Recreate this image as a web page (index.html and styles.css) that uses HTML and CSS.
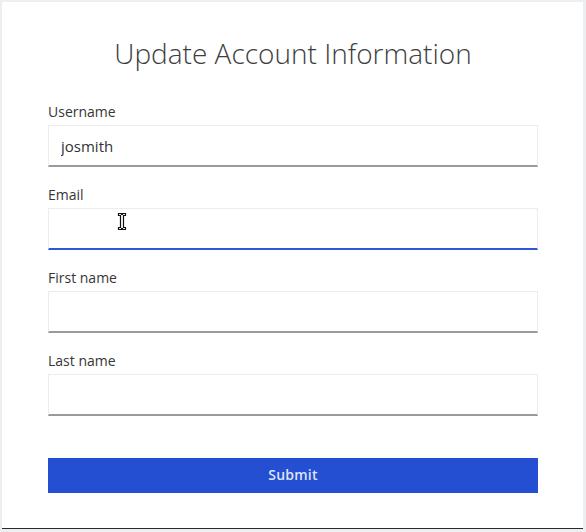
FILE: index.html
```html
<!DOCTYPE html>
<html lang="en">
<head>
    <meta charset="UTF-8">
    <meta name="viewport" content="width=device-width, initial-scale=1.0">
    <title>Update Account Information</title>
    <link rel="stylesheet" href="styles.css">
</head>
<body>
    <div class="card">
        <h1>Update Account Information</h1>
        <form class="account-form">
            <div class="field">
                <label for="username">Username</label>
                <input type="text" id="username" value="josmith">
            </div>
            <div class="field">
                <label for="email">Email</label>
                <div class="input-wrap">
                    <input type="text" id="email" class="focused">
                    <!-- mouse pointer over the email box -->
                    <svg class="cursor" width="10" height="19" viewBox="0 0 10 19">
                        <path d="M1.5 1.5h3v1h1v-1h3v2h-2v12h2v2h-3v-1h-1v1h-3v-2h2v-12h-2z" fill="#fff" stroke="#111" stroke-width="1.2"/>
                    </svg>
                </div>
            </div>
            <div class="field">
                <label for="firstName">First name</label>
                <input type="text" id="firstName">
            </div>
            <div class="field">
                <label for="lastName">Last name</label>
                <input type="text" id="lastName">
            </div>
            <button type="submit">Submit</button>
        </form>
    </div>
</body>
</html>
```

FILE: styles.css
```css
body {
    margin: 0;
    padding: 2px 3px 0 2px;
    background: #eceeef;
    font-family: "Open Sans", "Noto Sans", sans-serif;
}
.card {
    background: #fff;
    height: 527px;
    box-sizing: border-box;
    padding: 36px 45px 0 46px;
    border-bottom: 1px solid #2a2a2a;
}
h1 {
    margin: 0 0 34px 0;
    text-align: center;
    font-weight: 300;
    font-size: 28px;
    line-height: 30px;
    color: #3e3e3e;
}
.field {
    display: flex;
    flex-direction: column;
    margin-bottom: 18px;
}
.field label {
    font-size: 14px;
    line-height: 20px;
    color: #363636;
    margin-bottom: 3px;
}
.input-wrap {
    position: relative;
}
.field input {
    width: 100%;
    box-sizing: border-box;
    height: 42px;
    padding: 0 12px;
    border: 1px solid #ececec;
    border-bottom: 2px solid #9a9a9a;
    font-family: "Open Sans", "Noto Sans", sans-serif;
    font-size: 15px;
    color: #333;
    outline: none;
}
.field input.focused {
    border-bottom-color: #2c58d6;
}
.cursor {
    position: absolute;
    left: 69px;
    top: 4px;
}
.account-form button {
    display: block;
    width: 100%;
    height: 35px;
    margin-top: 42px;
    padding-bottom: 3px;
    border: none;
    background: #244fd3;
    color: #dde4fa;
    font-family: "Open Sans", "Noto Sans", sans-serif;
    font-size: 14px;
    font-weight: 600;
    letter-spacing: 0.2px;
}
```
